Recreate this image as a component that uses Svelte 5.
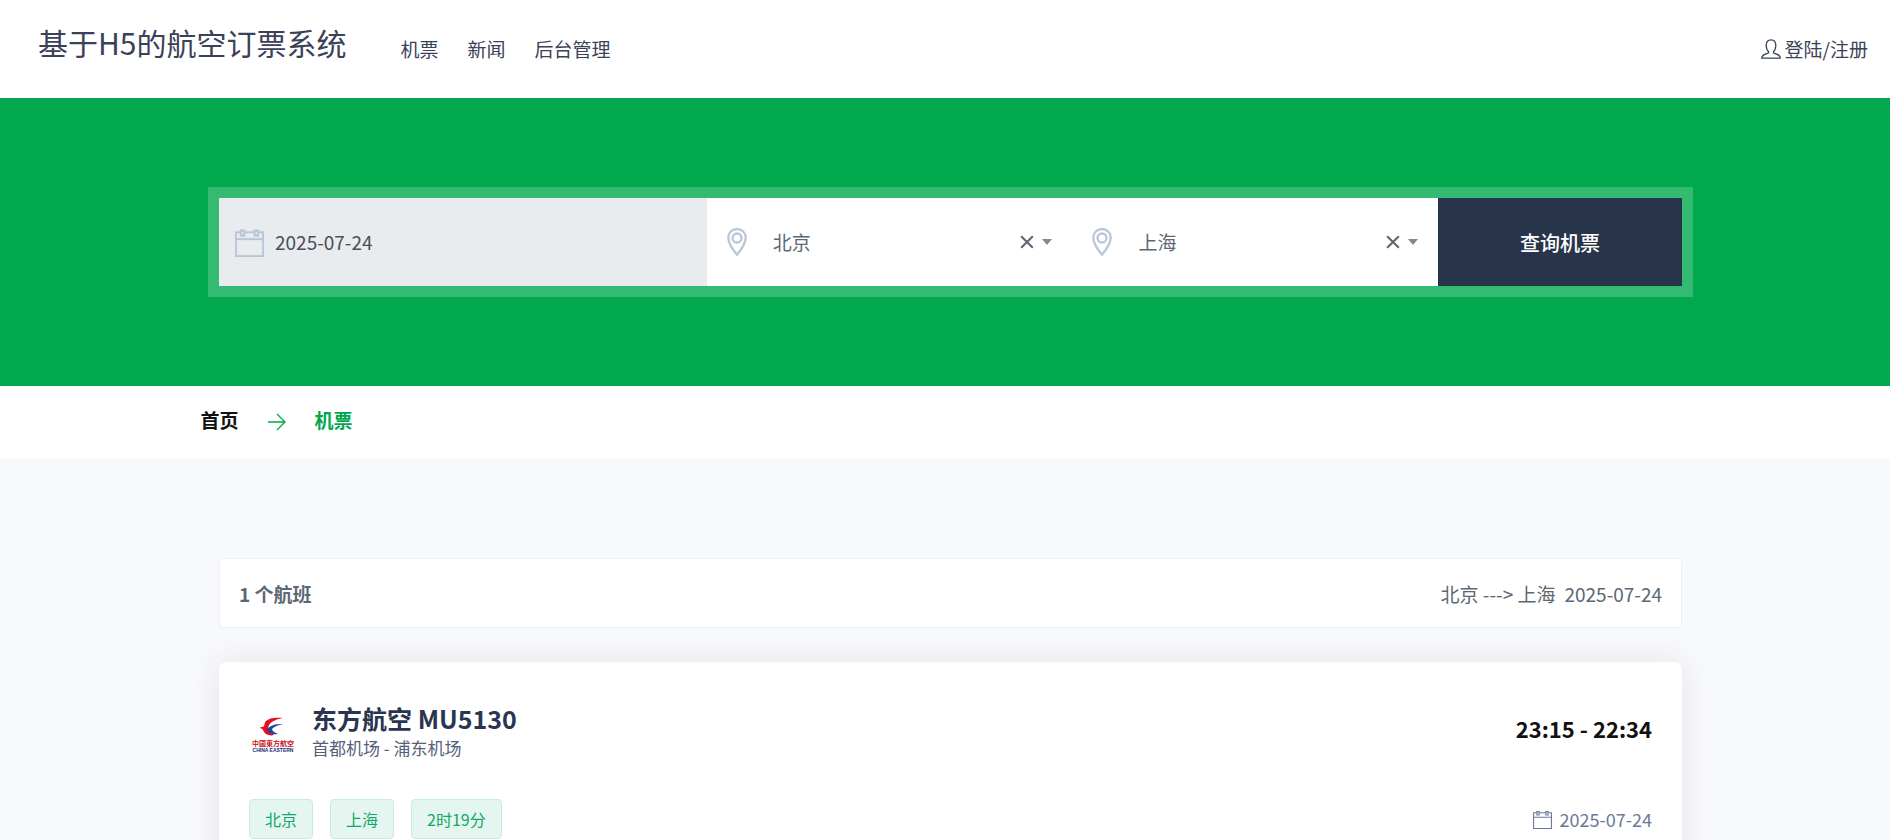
<script>
    let date = '2025-07-24';
    let from = '北京';
    let to = '上海';

    const cities = ['北京', '上海'];

    const links = ['机票', '新闻', '后台管理'];

    const flights = [
        {
            company: '东方航空',
            number: 'MU5130',
            airports: '首都机场 - 浦东机场',
            time: '23:15 - 22:34',
            date: '2025-07-24',
            tags: ['北京', '上海', '2时19分'],
        },
    ];
</script>

{#snippet calendar()}
    <svg class="icon calendar" viewBox="0 0 17 17" aria-hidden="true">
        <path d="M14 2V1h-3v1H6V1H3v1H0v15h17V2h-3zM12 2h1v2h-1V2zM4 2h1v2H4V2zM16 16H1V7h15v9zM1 6V3h2v2h3V3h5v2h3V3h2v3H1z" />
    </svg>
{/snippet}

{#snippet pin()}
    <svg class="icon pin" viewBox="0 0 20 28" aria-hidden="true">
        <path d="M10 1C5 1 1.300 4.800 1.300 9.700C1.300 15.500 6.500 22.500 10 26.800C13.500 22.500 18.700 15.500 18.700 9.700C18.700 4.800 15 1 10 1Z" />
        <circle cx="10" cy="10" r="4.500" />
    </svg>
{/snippet}

<div class="page">
    <header>
        <a class="brand" href="#home">基于H5的航空订票系统</a>
        <nav>
            {#each links as link}
                <a href="#{link}">{link}</a>
            {/each}
        </nav>
        <a class="login" href="#login">
            <svg class="icon user" viewBox="0 0 20 20" aria-hidden="true">
                <path d="M7.500 12.500C5.800 11.200 5.200 9 5.200 6.300C5.200 2.800 7 .8 10 .8S14.800 2.800 14.800 6.300C14.800 9 14.200 11.200 12.500 12.500V14C16 15 19.300 15.800 19.300 19.200H.7C.7 15.800 4 15 7.500 14Z" />
            </svg>
            <span>登陆/注册</span>
        </a>
    </header>

    <section class="banner">
        <form class="search" on:submit|preventDefault>
            <label class="field date-field">
                {@render calendar()}
                <input type="text" aria-label="日期" readonly value={date} />
            </label>
            <div class="field">
                {@render pin()}
                <select aria-label="出发城市" bind:value={from}>
                    {#each cities as city}
                        <option value={city}>{city}</option>
                    {/each}
                </select>
                <button type="button" class="clear" aria-label="清除出发城市" on:click={() => (from = '')}>
                    <svg viewBox="0 0 12 12"><path d="M1 1L11 11M11 1L1 11" /></svg>
                </button>
                <span class="caret"></span>
            </div>
            <div class="field">
                {@render pin()}
                <select aria-label="到达城市" bind:value={to}>
                    {#each cities as city}
                        <option value={city}>{city}</option>
                    {/each}
                </select>
                <button type="button" class="clear" aria-label="清除到达城市" on:click={() => (to = '')}>
                    <svg viewBox="0 0 12 12"><path d="M1 1L11 11M11 1L1 11" /></svg>
                </button>
                <span class="caret"></span>
            </div>
            <button type="submit" class="submit">查询机票</button>
        </form>
    </section>

    <div class="crumbs">
        <div class="crumbs-inner">
            <a href="#home">首页</a>
            <svg class="icon arrow" viewBox="0 0 18 18" aria-hidden="true">
                <path d="M0 9H17M9 1L17 9L9 17" />
            </svg>
            <a class="active" href="#tickets">机票</a>
        </div>
    </div>

    <main>
        <div class="container">
            <div class="summary">
                <strong>{flights.length} 个航班</strong>
                <span class="route"><span>北京 ---> 上海</span><span>{date}</span></span>
            </div>

            {#each flights as flight}
                <article class="card">
                    <div class="row">
                        <svg class="logo" viewBox="0 0 48 48" role="img" aria-label="中國東方航空">
                            <path fill="#e60e1c" d="M34 7C26 6 20 7 17 10C15 12 16 15 14 16C12 16 11 16 11 17C15 18 14 21 17 23C19 24 22 25 25 24C20 21 18 18 20 14C23 10 28 8 34 7Z" />
                            <path fill="#1d489b" d="M34 13C26 13 22 14 18 18C19 22 23 24 29 23C25 21 23 20 23 18C26 15 30 14 34 13Z" />
                            <text class="logo-cn" x="24" y="35">中國東方航空</text>
                            <text class="logo-en" x="24" y="41">CHINA EASTERN</text>
                        </svg>
                        <div class="info">
                            <h4>{flight.company} {flight.number}</h4>
                            <p>{flight.airports}</p>
                        </div>
                        <strong class="time">{flight.time}</strong>
                    </div>
                    <div class="row details">
                        <ul>
                            {#each flight.tags as tag}
                                <li>{tag}</li>
                            {/each}
                        </ul>
                        <span class="day">{@render calendar()}{flight.date}</span>
                    </div>
                </article>
            {/each}
        </div>
    </main>
</div>

<style>
    :global(body) {
        background-color: #f8f9fb;
    }

    .page {
        height: 100vh;
        overflow: hidden;
        font-family: "Noto Sans CJK SC", sans-serif;
        font-size: 19px;
        line-height: 28px;
        color: #5c6873;
    }

    .page :global(*) {
        box-sizing: border-box;
    }

    a {
        color: inherit;
        text-decoration: none;
    }

    input,
    select,
    button {
        margin: 0;
        padding: 0;
        border: none;
        outline: none;
        background: none;
        font-family: inherit;
        font-size: 19px;
        color: inherit;
    }

    .icon {
        flex: none;
        fill: none;
        stroke: currentColor;
    }

    .calendar {
        fill: currentColor;
        stroke: none;
    }

    .container {
        max-width: 1463px;
        margin: 0 auto;
    }

    header {
        display: flex;
        align-items: center;
        height: 98px;
        padding: 0 22px 0 38px;
        background-color: #fff;
        color: #3b4257;
    }

    .brand {
        font-size: 30px;
        line-height: 44px;
        padding-bottom: 14px;
    }

    nav {
        display: flex;
        gap: 29px;
        margin-left: 54px;
    }

    .login {
        display: flex;
        align-items: center;
        gap: 4px;
        margin-left: auto;
    }

    .user {
        width: 20px;
        height: 20px;
        stroke-width: 1.3;
    }

    .banner {
        height: 288px;
        padding: 89px 0 0 11px;
        background-color: #01a84e;
    }

    .search {
        display: grid;
        grid-template-columns: 4fr 3fr 3fr 2fr;
        max-width: 1485px;
        margin: 0 auto;
        border: 11px solid #34bb71;
    }

    .field {
        display: flex;
        align-items: center;
        min-width: 0;
        height: 88px;
        padding: 0 20px;
        background-color: #fff;
    }

    .date-field {
        gap: 11px;
        padding: 0 16px;
        background-color: #e8ecef;
        color: #495057;
    }

    .date-field input {
        flex: 1;
        min-width: 0;
        padding-bottom: 2px;
    }

    .date-field .calendar {
        width: 29px;
        height: 29px;
        color: #b9c5d8;
        stroke: currentColor;
        stroke-width: 0.2;
    }

    .pin {
        width: 20px;
        height: 28px;
        color: #b9c5d8;
        stroke-width: 2.3;
    }

    select {
        flex: 1;
        min-width: 0;
        margin-left: 26px;
        padding-bottom: 2px;
        appearance: none;
    }

    .clear {
        display: flex;
        cursor: pointer;
    }

    .clear svg {
        width: 14px;
        height: 14px;
        stroke: #5c6873;
        stroke-width: 1.8;
    }

    .caret {
        margin-left: 8px;
        border: 5px solid transparent;
        border-top: 6px solid #888;
        border-bottom: none;
    }

    .submit {
        background-color: #273449;
        color: #fff;
        font-size: 20px;
        font-weight: 500;
        cursor: pointer;
    }

    .crumbs {
        height: 72px;
        padding-left: 11px;
        background-color: #fff;
    }

    .crumbs-inner {
        display: flex;
        align-items: center;
        max-width: 1500px;
        height: 72px;
        margin: 0 auto;
        gap: 29px;
        font-weight: 700;
        color: #111;
    }

    .crumbs a {
        padding-bottom: 4px;
    }

    .arrow {
        width: 18px;
        height: 18px;
        color: #01a84e;
        stroke-width: 1.3;
    }

    .crumbs .active {
        color: #01a84e;
    }

    main {
        padding: 100px 0 60px 11px;
    }

    .summary {
        display: flex;
        align-items: center;
        justify-content: space-between;
        height: 70px;
        padding: 2px 19px 0;
        border: 1px solid #ebf2f7;
        border-radius: 4px;
        background-color: #fff;
    }

    strong {
        font-weight: 700;
    }

    .route {
        display: flex;
        gap: 9px;
    }

    .card {
        margin-top: 34px;
        padding: 38px 30px 30px;
        border-radius: 7px;
        background-color: #fff;
        box-shadow: 0 0 30px rgba(65, 45, 100, 0.1);
    }

    .row {
        display: flex;
        align-items: center;
    }

    .logo {
        width: 48px;
        height: 48px;
        margin-top: 10px;
    }

    .logo text {
        text-anchor: middle;
        font-weight: 700;
    }

    .logo-cn {
        fill: #c8161d;
        font-size: 7px;
    }

    .logo-en {
        fill: #1c1f7a;
        font-family: "Liberation Sans", sans-serif;
        font-size: 5px;
    }

    .info {
        margin-left: 15px;
    }

    h4 {
        margin: 0;
        font-size: 25px;
        font-weight: 700;
        line-height: 36px;
        color: #2a3650;
    }

    p {
        margin: 0;
        font-size: 17px;
        line-height: 24px;
        color: #566079;
    }

    .time {
        margin-left: auto;
        padding-bottom: 4px;
        font-size: 22px;
        color: #111;
    }

    .details {
        justify-content: space-between;
        margin-top: 39px;
    }

    ul {
        display: flex;
        gap: 17px;
        margin: 0;
        padding: 0;
        list-style: none;
    }

    li {
        padding: 0 15px;
        border: 1px solid #c9ecdd;
        border-radius: 4px;
        background-color: #e5f5ef;
        font-size: 16px;
        line-height: 38px;
        color: #0fa968;
    }

    .day {
        display: flex;
        align-items: center;
        gap: 8px;
        font-size: 18px;
        color: #6b7a99;
    }

    .day .calendar {
        width: 19px;
        height: 19px;
    }
</style>
